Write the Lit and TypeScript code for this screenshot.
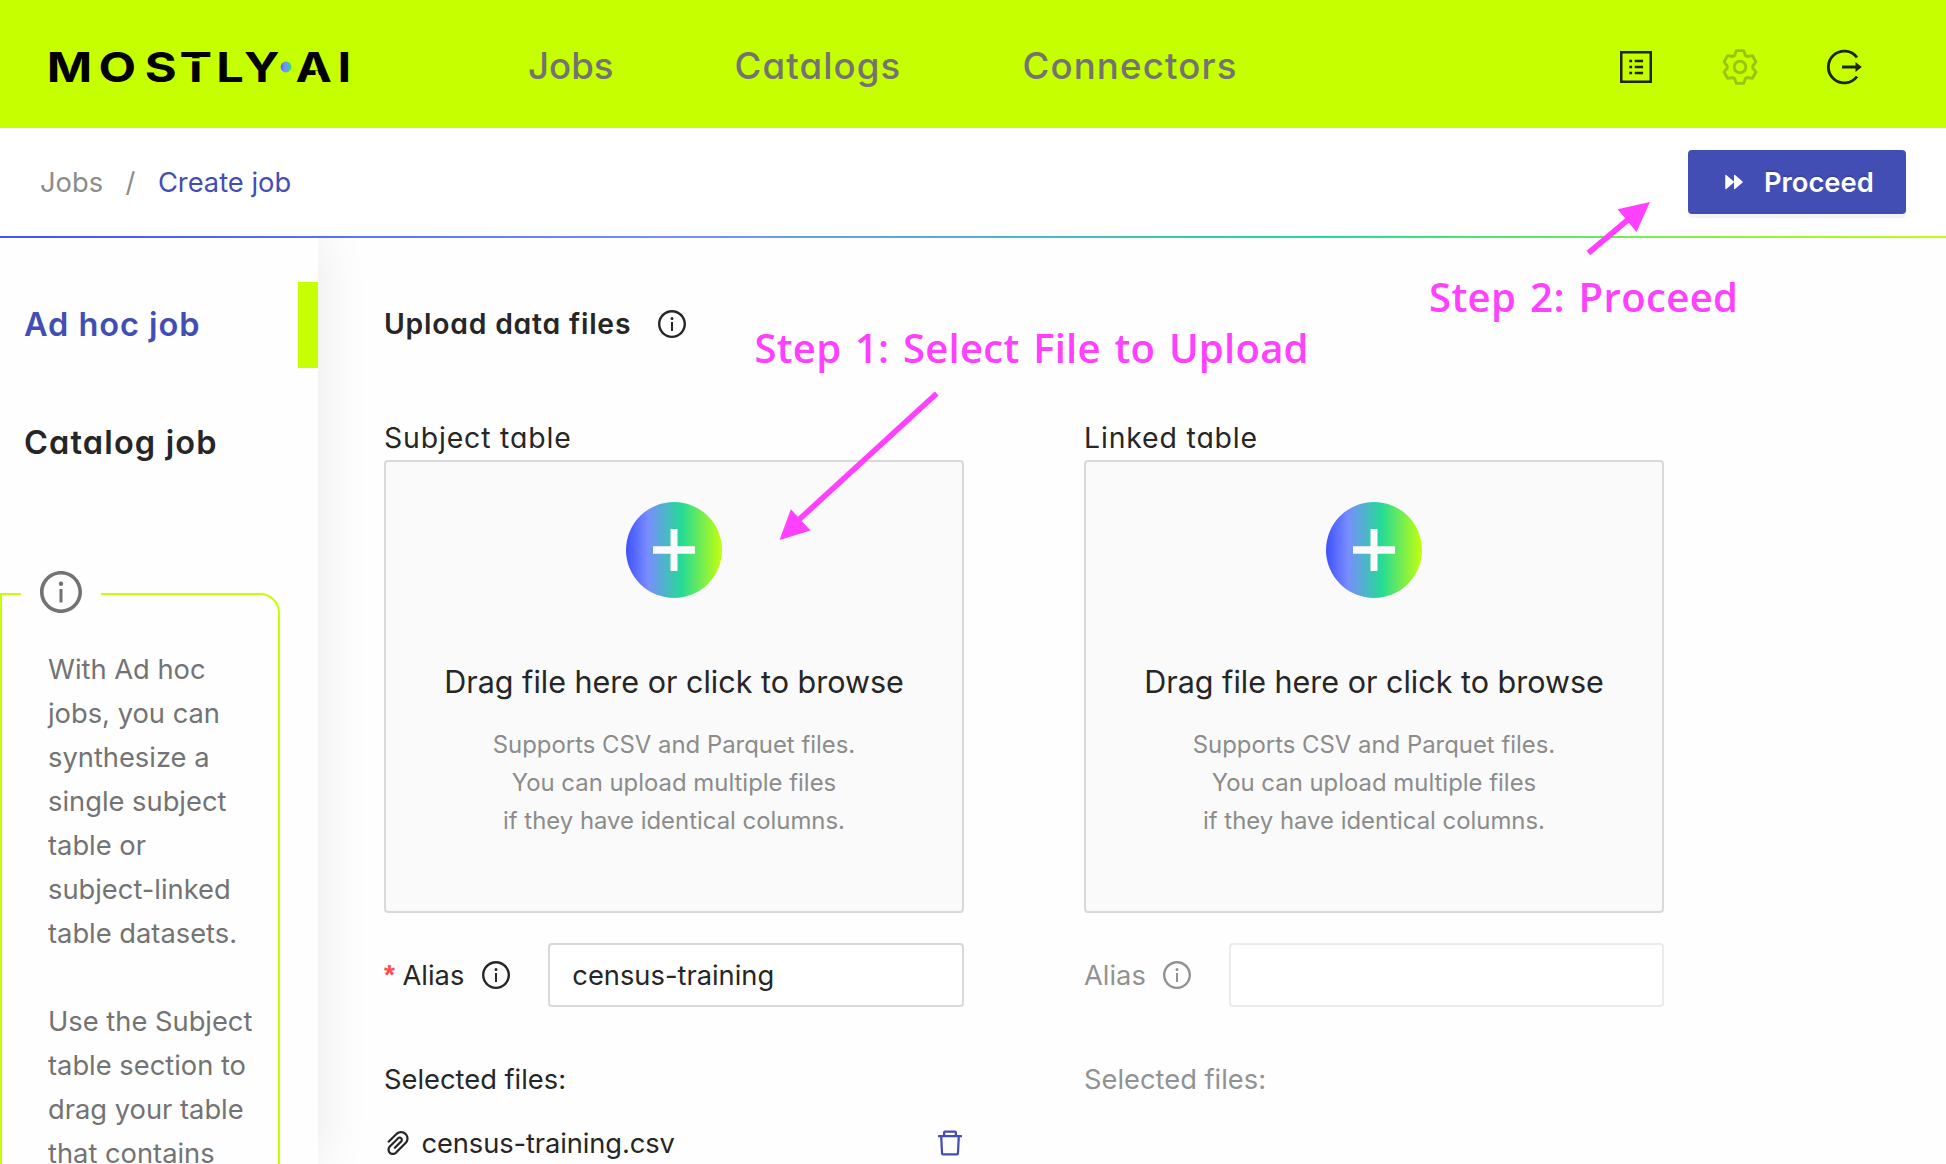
import { LitElement, html, svg, css, nothing } from "lit";
import { customElement, property } from "lit/decorators.js";

const ICONS: Record<string, string[]> = {
  info: [
    "M512 64C264.6 64 64 264.6 64 512s200.6 448 448 448 448-200.6 448-448S759.4 64 512 64zm0 820c-205.4 0-372-166.6-372-372s166.6-372 372-372 372 166.6 372 372-166.6 372-372 372z",
    "M464 336a48 48 0 1096 0 48 48 0 10-96 0zm72 112h-48c-4.4 0-8 3.6-8 8v272c0 4.4 3.6 8 8 8h48c4.4 0 8-3.6 8-8V456c0-4.4-3.6-8-8-8z",
  ],
  trash: [
    "M360 184h-8c4.4 0 8-3.6 8-8v8h304v-8c0 4.4 3.6 8 8 8h-8v72h72v-80c0-35.3-28.7-64-64-64H352c-35.3 0-64 28.7-64 64v80h72v-72zm504 72H160c-17.7 0-32 14.3-32 32v32c0 4.4 3.6 8 8 8h60.4l24.7 523c1.6 34.1 29.8 61 63.9 61h454c34.2 0 62.3-26.8 63.9-61l24.7-523H888c4.4 0 8-3.6 8-8v-32c0-17.7-14.3-32-32-32zM731.3 840H292.7l-24.2-512h487l-24.2 512z",
  ],
  clip: [
    "M779.3 196.6c-94.2-94.2-247.6-94.2-341.7 0l-261 260.8c-1.7 1.7-2.6 4-2.6 6.4s.9 4.7 2.6 6.4l36.9 36.9a9 9 0 0012.7 0l261-260.8c32.4-32.4 75.5-50.2 121.3-50.2s88.9 17.8 121.2 50.2c32.4 32.4 50.2 75.5 50.2 121.2 0 45.8-17.8 88.8-50.2 121.2l-266 265.9-43.1 43.1c-40.3 40.3-105.8 40.3-146.1 0-19.5-19.5-30.2-45.4-30.2-73s10.7-53.5 30.2-73l263.9-263.8c6.7-6.6 15.5-10.3 24.9-10.3h.1c9.4 0 18.1 3.7 24.7 10.3 6.7 6.7 10.3 15.5 10.3 24.9 0 9.3-3.7 18.1-10.3 24.7L372.4 653c-1.7 1.7-2.6 4-2.6 6.4s.9 4.7 2.6 6.4l36.9 36.9a9 9 0 0012.7 0l215.6-215.6c19.9-19.9 30.8-46.3 30.8-74.4s-11-54.6-30.8-74.4c-41.1-41.1-107.9-41-149 0L463 364 224.8 602.1A172.22 172.22 0 00174 724.8c0 46.3 18.1 89.8 50.8 122.5 33.9 33.8 78.3 50.7 122.7 50.7 44.4 0 88.8-16.9 122.6-50.7l309.2-309C824.8 492.7 850 432 850 367.5c.1-64.6-25.1-125.3-70.7-170.9z",
  ],
  forward: [
    "M825.8 498L538.4 249.9c-10.7-9.2-26.4-.9-26.4 14v496.3c0 14.9 15.7 23.2 26.4 14L825.8 526c8.3-7.2 8.3-20.8 0-28zm-320 0L218.4 249.9c-10.7-9.2-26.4-.9-26.4 14v496.3c0 14.9 15.7 23.2 26.4 14L505.8 526c4.1-3.6 6.2-8.8 6.2-14 0-5.2-2.1-10.4-6.2-14z",
  ],
};

const icon = (name: string, cls = "") => html`
  <svg class="icon ${cls}" viewBox="0 0 1024 1024" fill="currentColor" aria-hidden="true">
    ${ICONS[name].map((d) => svg`<path d=${d}></path>`)}
  </svg>
`;

/* Outline of a six-toothed gear centred on 0,0. */
const gearOutline = () => {
  const tooth = [[-5.4, -11.6], [-3.6, -16.4], [3.6, -16.4], [5.4, -11.6]];
  const pts: string[] = [];
  for (let i = 0; i < 6; i++) {
    const a = (i * Math.PI) / 3;
    for (const [x, y] of tooth) {
      pts.push(
        `${(x * Math.cos(a) - y * Math.sin(a)).toFixed(2)},${(x * Math.sin(a) + y * Math.cos(a)).toFixed(2)}`
      );
    }
  }
  return pts.join(" ");
};

const base = css`
  * {
    box-sizing: border-box;
  }
  .icon {
    display: block;
    flex: none;
    width: 32px;
    height: 32px;
  }
`;

@customElement("upload-column")
export class UploadColumn extends LitElement {
  @property() heading = "";
  @property() alias = "";
  @property() file = "";
  @property({ type: Boolean }) active = false;

  static styles = [
    base,
    css`
      :host {
        display: block;
        width: 580px;
      }
      .label {
        font-size: 28.4px;
        line-height: 44px;
        font-feature-settings: "cv11";
        letter-spacing: 0.85px;
      }
      .drop {
        height: 453px;
        padding-top: 40px;
        border: 2px solid #d9d9d9;
        border-radius: 4px;
        background: #fafafa;
        display: flex;
        flex-direction: column;
        align-items: center;
        text-align: center;
      }
      .plus {
        width: 96px;
        height: 96px;
        display: block;
      }
      .drag {
        margin-top: 59px;
        font-size: 30.5px;
        line-height: 50px;
        white-space: nowrap;
      }
      .hint {
        margin-top: 19px;
        font-size: 23.9px;
        line-height: 38px;
        color: #8c8c8c;
        white-space: nowrap;
      }
      .alias {
        margin-top: 30px;
        height: 64px;
        line-height: 44px;
        display: flex;
        align-items: center;
      }
      .star {
        width: 18.5px;
        color: #ff4d4f;
        font-family: "Liberation Sans", sans-serif;
        font-size: 28px;
        font-weight: 700;
      }
      .word {
        padding-top: 1px;
      }
      .alias .icon {
        margin-left: 16px;
      }
      .input {
        flex: 1;
        height: 64px;
        margin-left: 36px;
        padding-left: 22px;
        border: 2px solid #d9d9d9;
        border-radius: 4px;
        background: #fff;
        line-height: 61px;
      }
      .selected {
        margin-top: 51px;
        line-height: 44px;
      }
      .file {
        margin: 19px -2px 0;
        height: 44px;
        display: flex;
        align-items: center;
      }
      .name {
        flex: 1;
        margin-left: 7.5px;
        letter-spacing: -0.1px;
      }
      .trash {
        color: #434eb5;
      }
      .muted {
        color: #929292;
      }
      .muted .icon {
        margin-left: 15px;
      }
      .muted .input {
        border-color: #ebebeb;
      }
    `,
  ];

  render() {
    const tone = this.active ? "" : "muted";
    return html`
      <div class="label">${this.heading}</div>
      <div class="drop">
        <svg class="plus" viewBox="0 0 96 96">
          <defs>
            <linearGradient id="g">
              <stop offset="0" stop-color="#4051ff"></stop>
              <stop offset=".23" stop-color="#788dff"></stop>
              <stop offset=".58" stop-color="#24db96"></stop>
              <stop offset="1" stop-color="#c3ff0c"></stop>
            </linearGradient>
          </defs>
          <circle cx="48" cy="48" r="48" fill="url(#g)"></circle>
          <path d="M44.500 27h7v17.300h17.500v7.400H51.500V69h-7V51.700H27v-7.400h17.500z" fill="#fafafa"></path>
        </svg>
        <div class="drag">Drag file here or click to browse</div>
        <div class="hint">
          Supports CSV and Parquet files.<br />You can upload multiple files<br />if they have identical columns.
        </div>
      </div>
      <div class="alias ${tone}">
        ${this.active ? html`<span class="star">*</span>` : nothing}
        <span class="word">Alias</span>
        ${icon("info")}
        <div class="input">${this.alias}</div>
      </div>
      <div class="selected ${tone}">Selected files:</div>
      ${this.file
        ? html`<div class="file">
            ${icon("clip")}
            <span class="name">${this.file}</span>
            ${icon("trash", "trash")}
          </div>`
        : nothing}
    `;
  }
}

@customElement("app-root")
export class AppRoot extends LitElement {
  static styles = [
    base,
    css`
      :host {
        display: block;
        position: relative;
        width: 1946px;
        height: 1164px;
        overflow: hidden;
        background: #fefefe;
        color: #262626;
        font-family: Inter, "Liberation Sans", sans-serif;
        font-size: 27.3px;
      }
      .top {
        height: 128px;
        padding: 6px 84px 0 48px;
        background: #c6ff00;
        display: flex;
        align-items: center;
      }
      .logo {
        width: 304px;
        height: 40px;
        display: block;
        overflow: visible;
      }
      .logo text {
        font: 700 41.3px Inter, sans-serif;
      }
      .nav {
        flex: 1;
        margin: -2px 0 0 176px;
        display: flex;
        gap: 121px;
        color: #737373;
        font-size: 36.6px;
        font-weight: 500;
        line-height: 44px;
        letter-spacing: 1.15px;
        font-feature-settings: "cv11";
      }
      .nav .short {
        letter-spacing: 0;
      }
      .tools {
        display: flex;
        gap: 68px;
      }
      .tool {
        display: block;
        width: 36px;
        height: 36px;
        overflow: visible;
      }
      .sub {
        position: relative;
        z-index: 1;
        height: 110px;
        padding: 0 40px;
        background: #fff;
        border-bottom: 2px solid;
        border-image: linear-gradient(90deg, #4051ff, #788dff 35%, #24db96 68%, #c3ff0c) 1;
        display: flex;
        align-items: center;
        color: #8c8c8c;
      }
      .slash {
        margin: 0 22.5px;
      }
      .current {
        flex: 1;
        color: #434eb5;
      }
      .proceed {
        width: 218px;
        height: 64px;
        padding-left: 32px;
        border-radius: 4px;
        background: #434eb5;
        color: #fff;
        box-shadow: 0 4px 0 rgba(0, 0, 0, 0.045);
        text-shadow: 0 -2px 0 rgba(0, 0, 0, 0.12);
        font-weight: 600;
        display: flex;
        align-items: center;
        gap: 16px;
      }
      .proceed .icon {
        width: 28px;
        height: 28px;
      }
      .body {
        display: flex;
        height: 926px;
      }
      .side {
        width: 318px;
        padding-top: 44px;
        background: #fefefe;
        box-shadow: 0 0 50px rgba(0, 0, 0, 0.09);
      }
      .item {
        height: 86px;
        margin-bottom: 32px;
        padding: 0 0 1px 24px;
        display: flex;
        align-items: center;
        font-size: 32.5px;
        font-weight: 560;
        font-feature-settings: "cv11";
        letter-spacing: 1.15px;
      }
      .item.on {
        color: #434eb5;
        border-right: 20px solid #c6ff00;
        letter-spacing: 0.95px;
      }
      .note {
        position: relative;
        width: 280px;
        height: 640px;
        margin-top: 107px;
        padding: 53px 0 0 46px;
        border: 2px solid #c6ff00;
        border-radius: 0 20px 0 0;
        color: #737373;
        line-height: 44px;
        white-space: nowrap;
      }
      .note p {
        margin: 0 0 44px;
      }
      .legend {
        position: absolute;
        left: 19px;
        top: -27px;
        width: 80px;
        height: 48px;
        background: #fefefe;
        display: flex;
        justify-content: center;
        align-items: center;
      }
      .legend .icon {
        width: 48px;
        height: 48px;
      }
      .main {
        flex: 1;
        padding: 64px 0 0 66px;
      }
      .title {
        height: 44px;
        display: flex;
        align-items: center;
        gap: 25px;
        font-size: 28.3px;
        font-weight: 570;
        font-feature-settings: "cv11";
        letter-spacing: 0.8px;
      }
      .columns {
        margin-top: 70px;
        display: flex;
        gap: 120px;
      }
      .marks {
        position: absolute;
        left: 0;
        top: 0;
        z-index: 2;
        width: 1946px;
        height: 1164px;
        fill: #ff40ff;
      }
      .marks text {
        font: 600 40px "Open Sans", "Noto Sans", sans-serif;
        word-spacing: 3px;
      }
      .marks line {
        stroke: #ff40ff;
        stroke-width: 5.6;
      }
    `,
  ];

  render() {
    return html`
      <header class="top">
        <svg class="logo" viewBox="48 47 304 40">
          <defs>
            <linearGradient id="dot">
              <stop offset="0" stop-color="#4f62ff"></stop>
              <stop offset=".35" stop-color="#788dff"></stop>
              <stop offset="1" stop-color="#24db96"></stop>
            </linearGradient>
          </defs>
          <text transform="scale(1.18 1)" x="39.600 83.500 122.700 152.200 183.300 206.800 250.400 286" y="82">MOSTLYAI</text>
          <path d="M190 58.200h13v3h-13zM315.400 70.500h2.200l2.600 7.500h-4.300z" fill="#c6ff00"></path>
          <circle cx="286" cy="67" r="5.400" fill="url(#dot)"></circle>
        </svg>
        <nav class="nav"><span class="short">Jobs</span><span>Catalogs</span><span>Connectors</span></nav>
        <div class="tools">
          <svg class="tool" viewBox="-18 -18 36 36" fill="none" stroke="#1e2600" stroke-width="2.5">
            <rect x="-14.750" y="-14.750" width="29.500" height="29.500"></rect>
            <path d="M-6.700-6.100h2.800M-6.700 0h2.800M-6.700 6.100h2.800M-1.300-6.100h8.400M-1.300 0h8.400M-1.300 6.100h8.400"></path>
          </svg>
          <svg class="tool" viewBox="-18 -18 36 36" fill="none" stroke="#9cc40c" stroke-width="2.9" stroke-linejoin="round">
            <polygon points=${gearOutline()}></polygon>
            <circle r="5.800"></circle>
          </svg>
          <svg class="tool" viewBox="-17.500 -18 36 36" fill="none" stroke="#1e2600" stroke-width="2.900">
            <path d="M13.500-9.500A15.900 15.900 0 1 0 13.500 9.500M-1.500 0H12.500"></path>
            <path d="M12-5L18.300 0L12 5z" fill="#1e2600" stroke="none"></path>
          </svg>
        </div>
      </header>
      <div class="sub">
        <span>Jobs</span><span class="slash">/</span><span class="current">Create job</span>
        <div class="proceed">${icon("forward")}<span>Proceed</span></div>
      </div>
      <div class="body">
        <aside class="side">
          <div class="item on">Ad hoc job</div>
          <div class="item">Catalog job</div>
          <div class="note">
            <div class="legend">${icon("info")}</div>
            <p>
              With Ad hoc<br />jobs, you can<br />synthesize a<br />single subject<br />table or<br />subject-linked<br />table
              datasets.
            </p>
            <p>Use the Subject<br />table section to<br />drag your table<br />that contains</p>
          </div>
        </aside>
        <main class="main">
          <div class="title"><span>Upload data files</span>${icon("info")}</div>
          <div class="columns">
            <upload-column heading="Subject table" alias="census-training" file="census-training.csv" active></upload-column>
            <upload-column heading="Linked table"></upload-column>
          </div>
        </main>
      </div>
      <svg class="marks" viewBox="0 0 1946 1164">
        <text x="754.500" y="362.500" textLength="554">Step 1: Select File to Upload</text>
        <text x="1429" y="311.500" textLength="309">Step 2: Proceed</text>
        <line x1="936.700" y1="393.500" x2="798" y2="520.500"></line>
        <polygon points="779.500,540 790.900,509.300 810.500,530.500"></polygon>
        <line x1="1588.400" y1="253" x2="1630" y2="218"></line>
        <polygon points="1650,202 1617.600,209.300 1636.500,232"></polygon>
      </svg>
    `;
  }
}
